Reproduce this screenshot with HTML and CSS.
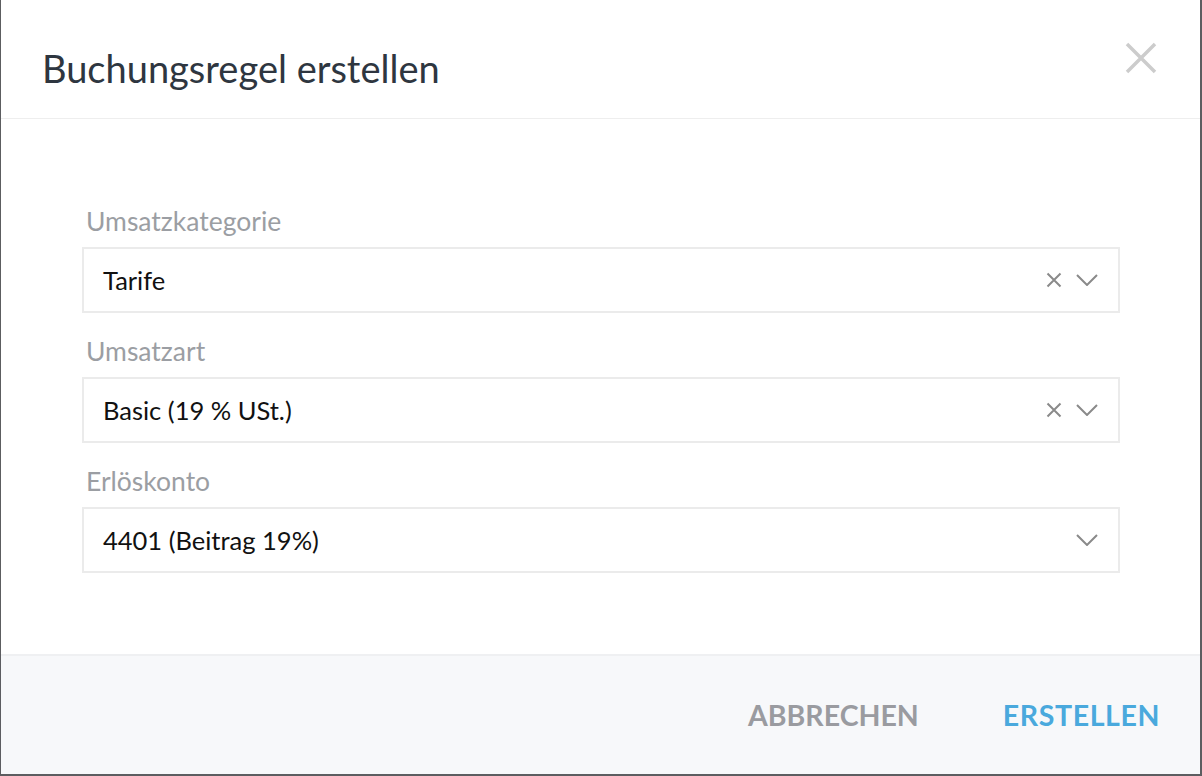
FILE: index.html
```html
<!DOCTYPE html>
<html lang="de">
<head>
  <meta charset="UTF-8">
  <meta name="viewport" content="width=device-width, initial-scale=1">
  <title>Buchungsregel erstellen</title>
  <link rel="stylesheet" href="styles.css">
</head>
<body>

  <div class="modal">
    <div class="modal-header">
      <h2>Buchungsregel erstellen</h2>
      <button class="close-btn" aria-label="Schließen">
        <svg width="32" height="32" viewBox="0 0 32 32">
          <path d="M2 2 L30 30 M30 2 L2 30" stroke="#cccccc" stroke-width="3.5" fill="none"/>
        </svg>
      </button>
    </div>

    <div class="modal-body">
      <div class="field">
        <label>Umsatzkategorie</label>
        <div class="select">
          <span class="value">Tarife</span>
          <span class="icons">
            <svg class="clear" width="16" height="16" viewBox="0 0 16 16">
              <path d="M1.5 1.5 L14.5 14.5 M14.5 1.5 L1.5 14.5" stroke="#8a8a8a" stroke-width="2" fill="none"/>
            </svg>
            <svg class="chevron" width="22" height="12" viewBox="0 0 22 12">
              <path d="M1 1 L11 11 L21 1" stroke="#8a8a8a" stroke-width="2" fill="none"/>
            </svg>
          </span>
        </div>
      </div>

      <div class="field">
        <label>Umsatzart</label>
        <div class="select">
          <span class="value">Basic (19 % USt.)</span>
          <span class="icons">
            <svg class="clear" width="16" height="16" viewBox="0 0 16 16">
              <path d="M1.5 1.5 L14.5 14.5 M14.5 1.5 L1.5 14.5" stroke="#8a8a8a" stroke-width="2" fill="none"/>
            </svg>
            <svg class="chevron" width="22" height="12" viewBox="0 0 22 12">
              <path d="M1 1 L11 11 L21 1" stroke="#8a8a8a" stroke-width="2" fill="none"/>
            </svg>
          </span>
        </div>
      </div>

      <div class="field">
        <label>Erlöskonto</label>
        <div class="select">
          <span class="value">4401 (Beitrag 19%)</span>
          <span class="icons">
            <svg class="chevron" width="22" height="12" viewBox="0 0 22 12">
              <path d="M1 1 L11 11 L21 1" stroke="#8a8a8a" stroke-width="2" fill="none"/>
            </svg>
          </span>
        </div>
      </div>
    </div>

    <div class="modal-footer">
      <button class="btn-cancel">ABBRECHEN</button>
      <button class="btn-create">ERSTELLEN</button>
    </div>
  </div>

</body>
</html>
```

FILE: styles.css
```css
* { box-sizing: border-box; }
body {
  margin: 0;
  font-family: 'Lato', 'Noto Sans', sans-serif;
  background: #5c5d60;
  height: 776px;
  overflow: hidden;
}

.modal {
  margin-left: 1px;
  width: 1199px;
  height: 774px;
  background: #fff;
  display: flex;
  flex-direction: column;
}

.modal-header {
  height: 119px;
  border-bottom: 1px solid #eeeeee;
  display: flex;
  align-items: center;
  justify-content: space-between;
  padding: 0 43px 0 41px;
}

.modal-header h2 {
  margin: 0;
  font-size: 38px;
  font-weight: 400;
  color: #2e3640;
  padding-top: 18px;
}

.close-btn {
  background: none;
  border: none;
  padding: 0;
  cursor: pointer;
  display: flex;
  margin-top: -2px;
}

.modal-body {
  flex: 1;
  padding: 87px 80px 0 81px;
  display: flex;
  flex-direction: column;
  gap: 23px;
}

.field label {
  display: block;
  font-size: 26.5px;
  line-height: 30px;
  color: #9b9ea3;
  margin-bottom: 11px;
  padding-left: 4px;
}

.select {
  height: 66px;
  border: 2px solid #ebebeb;
  display: flex;
  align-items: center;
  justify-content: space-between;
  padding: 0 20px 0 19px;
}

.select .value {
  font-size: 25.5px;
  color: #111;
}

.icons {
  display: flex;
  align-items: center;
  gap: 14px;
}

.modal-footer {
  height: 120px;
  background: #f7f8fa;
  border-top: 2px solid #eff0f2;
  display: flex;
  align-items: center;
  justify-content: flex-end;
  gap: 84px;
  padding: 0 40px 0 0;
}

.modal-footer button {
  background: none;
  border: none;
  padding: 0;
  font-family: inherit;
  font-size: 28.5px;
  font-weight: 700;
  cursor: pointer;
}

.btn-cancel { color: #9a9ba0; }
.btn-create { color: #4aa9dd; letter-spacing: 0.6px; }
```
